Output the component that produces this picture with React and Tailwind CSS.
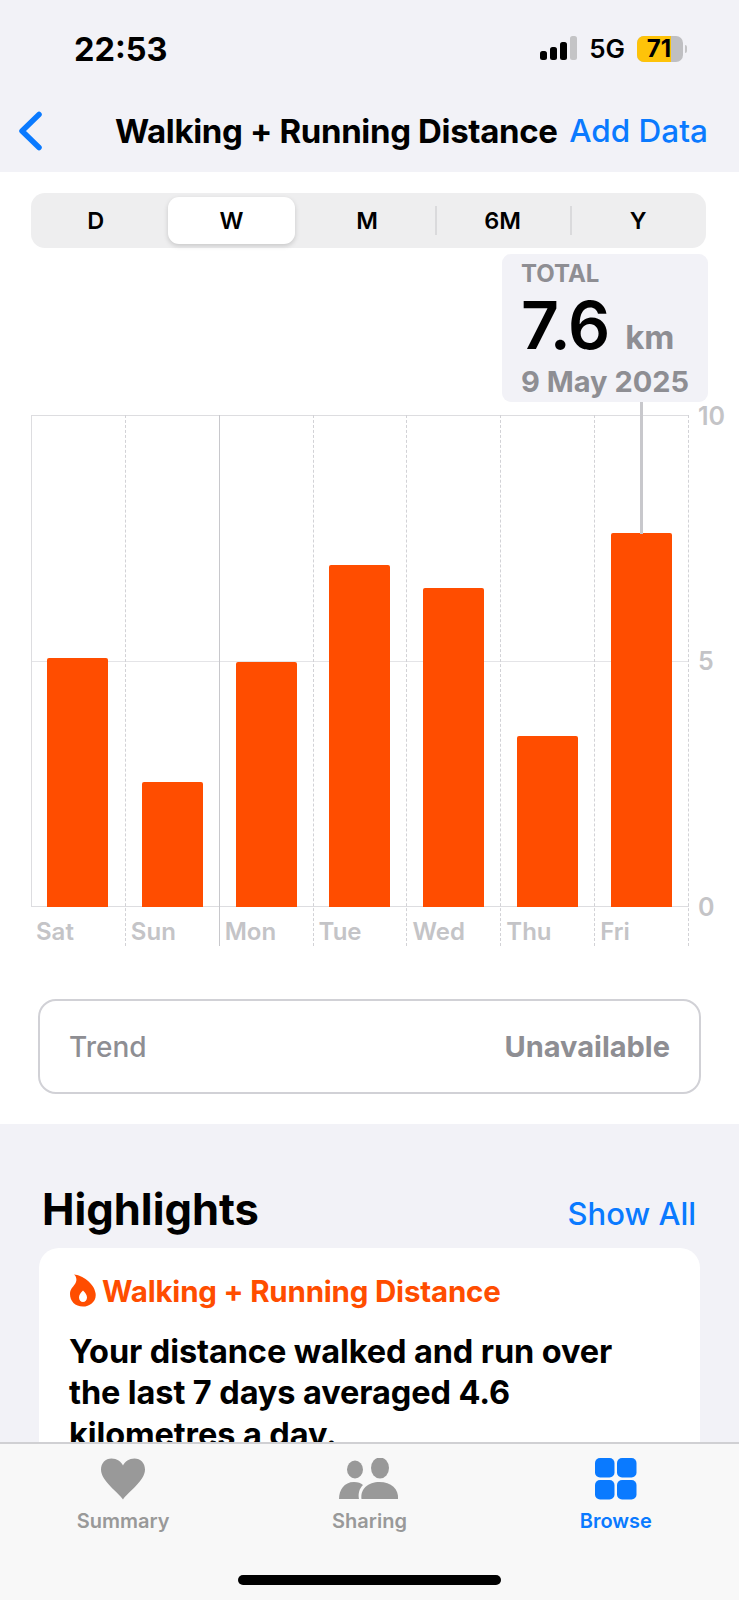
const days = [
  { label: 'Sat', height: 249 },
  { label: 'Sun', height: 125 },
  { label: 'Mon', height: 245 },
  { label: 'Tue', height: 342 },
  { label: 'Wed', height: 319 },
  { label: 'Thu', height: 171 },
  { label: 'Fri', height: 374 },
]

const ranges = ['D', 'W', 'M', '6M', 'Y']

function StatusBar() {
  return (
    <div className="flex h-[100px] items-start justify-between pt-[31px] pl-[74px] pr-[52px]">
      <span className="text-[32.5px] leading-[38px] font-bold text-black">22:53</span>
      <div className="flex items-center pt-[5px]">
        <svg width="37" height="26" viewBox="0 0 37 26">
          <rect x="0" y="15" width="7" height="9" rx="2.5" fill="#000" />
          <rect x="10" y="11" width="7" height="13" rx="2.5" fill="#000" />
          <rect x="20" y="6" width="7" height="18" rx="2.5" fill="#000" />
          <rect x="30" y="0" width="7" height="24" rx="2.5" fill="#c4c4c6" />
        </svg>
        <span className="ml-[12px] text-[26px] leading-[26px] font-semibold text-black">5G</span>
        <div className="relative ml-[12px] h-[26px] w-[46px] rounded-[7px] bg-[#bfbfc2]">
          <div className="h-full w-[34px] rounded-l-[7px] bg-[#fec309]" />
          <span className="absolute inset-0 flex items-center justify-center pr-[2px] text-[24px] leading-none font-bold text-black">71</span>
        </div>
        <div className="ml-[2px] h-[8px] w-[2px] rounded-r-full bg-[#c4c4c6]" />
      </div>
    </div>
  )
}

function NavBar() {
  return (
    <div className="flex h-[72px] items-start pl-[17px] pr-[31px]">
      <svg width="26" height="40" viewBox="0 0 26 40" className="mt-[11px]">
        <path d="M22 3.5 L5 20 L22 36.5" fill="none" stroke="#0a7aff" strokeWidth="5.5" strokeLinecap="round" strokeLinejoin="round" />
      </svg>
      <span className="ml-[72px] pt-[1px] text-[33px] leading-[60px] font-bold tracking-[-0.35px] text-black whitespace-nowrap">Walking + Running Distance</span>
      <span className="ml-auto pt-[1px] text-[31.5px] leading-[60px] font-medium text-[#0a7aff] whitespace-nowrap">Add Data</span>
    </div>
  )
}

function RangePicker() {
  return (
    <div className="mx-[31px] h-[55px] w-[675px] rounded-[14px] bg-[#eeeeef]">
      <div className="ml-[-3px] flex h-full w-[678px] items-center">
        {ranges.map((r, i) => (
          <div key={r} className="relative flex h-full flex-1 items-center justify-center">
            {r === 'W' && <div className="absolute inset-x-[4px] inset-y-[4px] rounded-[11px] bg-white shadow-[0_2px_5px_rgba(0,0,0,0.16)]" />}
            {i > 2 && <div className="absolute left-0 top-[13px] h-[29px] w-[2px] bg-[#dadadc]" />}
            <span className="relative text-[23.5px] font-semibold text-black">{r}</span>
          </div>
        ))}
      </div>
    </div>
  )
}

function Chart() {
  return (
    <div className="relative mx-[31px] mt-[167px] h-[531px] w-[658px]">
      {/* grid lines */}
      <div className="absolute inset-x-0 top-0 h-[492px] border-y border-l border-[#dddde0]">
        <div className="mt-[245px] h-px bg-[#e4e4e7]" />
      </div>

      <div className="relative grid h-full grid-cols-7 border-r border-dashed border-[#d2d2d6]">
        {days.map((d, i) => (
          <div
            key={d.label}
            className={
              i === 0
                ? 'flex h-full flex-col'
                : i === 2
                  ? 'flex h-full flex-col border-l border-[#c8c8cc]'
                  : 'flex h-full flex-col border-l border-dashed border-[#d2d2d6]'
            }
          >
            <div className="flex h-[492px] items-end justify-center">
              <div className="w-[61px] rounded-t-[2px] bg-[#ff4d00]" style={{ height: d.height }} />
            </div>
            <span className="pl-[5px] pt-[11px] text-[24px] leading-[28px] font-semibold text-[#c4c4c7]">{d.label}</span>
          </div>
        ))}
      </div>

      {/* value axis */}
      <span className="absolute left-[667px] top-[-13px] text-[25px] leading-[28px] font-semibold text-[#c4c4c7]">10</span>
      <span className="absolute left-[667px] top-[232px] text-[25px] leading-[28px] font-semibold text-[#c4c4c7]">5</span>
      <span className="absolute left-[667px] top-[478px] text-[25px] leading-[28px] font-semibold text-[#c4c4c7]">0</span>

      {/* selected day callout */}
      <div className="absolute left-[609px] top-[-13px] h-[132px] w-[3px] bg-[#c8c8cc]" />
      <div className="absolute left-[471px] top-[-161px] h-[148px] w-[206px] rounded-[9px] bg-[#f2f2f7] pl-[19px] pt-[6px]">
        <div className="text-[24px] leading-[28px] font-bold text-[#8e8e93]">TOTAL</div>
        <div className="mt-[2px] flex items-baseline">
          <span className="text-[66px] leading-[70px] font-semibold tracking-[-1px] text-black">7.6</span>
          <span className="ml-[16px] text-[33px] leading-[40px] font-bold text-[#8e8e93]">km</span>
        </div>
        <div className="mt-[4px] text-[29px] leading-[36px] font-bold whitespace-nowrap text-[#8e8e93]">9 May 2025</div>
      </div>
    </div>
  )
}

function TabBar() {
  return (
    <div className="relative grid h-[158px] shrink-0 grid-cols-3 border-t-2 border-[#d0d0d3] bg-[#f8f8f8] pt-[14px]">
      <div className="flex flex-col items-center">
        <svg width="46" height="42" viewBox="0 0 46 42">
          <path d="M23 41.5 C18 34 1 23 1 11.5 C1 5 5.5 0.5 11.5 0.5 C17 0.5 21 3.5 23 7.5 C25 3.5 29 0.5 34.5 0.5 C40.5 0.5 45 5 45 11.5 C45 23 28 34 23 41.5 Z" fill="#999999" />
        </svg>
        <span className="mt-[8px] text-[20px] leading-[26px] font-semibold text-[#999999]">Summary</span>
      </div>
      <div className="flex flex-col items-center">
        <svg width="60" height="42" viewBox="0 0 60 42">
          <ellipse cx="16" cy="11.5" rx="8" ry="9" fill="#999999" />
          <ellipse cx="41" cy="10" rx="9" ry="10.5" fill="#999999" />
          <path d="M0 41 C0 32 5 24 15 24 C19 24 22 25 24 27 C20 31 19 36 20 41 Z" fill="#999999" />
          <path d="M22.5 41 C21 31 29 24 40.5 24 C52 24 60 31 59 41 Z" fill="#999999" />
        </svg>
        <span className="mt-[8px] text-[20px] leading-[26px] font-semibold text-[#999999]">Sharing</span>
      </div>
      <div className="flex flex-col items-center">
        <svg width="42" height="42" viewBox="0 0 42 42">
          <rect x="0" y="0" width="19.5" height="19.5" rx="5" fill="#0a7aff" />
          <rect x="22" y="0" width="19.5" height="19.5" rx="5" fill="#0a7aff" />
          <rect x="0" y="22" width="19.5" height="19.5" rx="5" fill="#0a7aff" />
          <rect x="22" y="22" width="19.5" height="19.5" rx="5" fill="#0a7aff" />
        </svg>
        <span className="mt-[8px] text-[20px] leading-[26px] font-semibold text-[#0a7aff]">Browse</span>
      </div>
      <div className="absolute bottom-[15px] left-[238px] h-[10px] w-[263px] rounded-full bg-black" />
    </div>
  )
}

export default function App() {
  return (
    <div className="flex h-[1600px] w-[739px] flex-col overflow-hidden bg-[#f2f2f7] font-['Inter',sans-serif]">
      <div className="min-h-0 flex-1 overflow-hidden">
        <StatusBar />
        <NavBar />

        <div className="h-[952px] bg-white pt-[21px]">
          <RangePicker />
          <Chart />
          <div className="mt-[53px] ml-[38px] flex h-[95px] w-[663px] items-center justify-between rounded-[18px] border-2 border-[#d1d1d6] px-[29px]">
            <span className="text-[28px] font-medium text-[#8e8e93]">Trend</span>
            <span className="text-[29px] font-bold text-[#8e8e93]">Unavailable</span>
          </div>
        </div>

        <div className="flex items-baseline justify-between pl-[42px] pr-[43px] pt-[60px]">
          <h2 className="text-[43.5px] leading-[50px] font-bold text-black">Highlights</h2>
          <span className="text-[31px] font-medium text-[#0a7aff]">Show All</span>
        </div>

        <div className="mx-[39px] mt-[10px] rounded-[20px] bg-white px-[30px] pt-[26px] pb-[20px]">
          <div className="flex items-center pl-[1px]">
            <svg width="26" height="33" viewBox="0 0 26 33">
              <path
                fillRule="evenodd"
                d="M4 0.5 C12 1 24 9 25.5 19 C27 27 20 32.5 13 32.5 C5 32.5 0 27 0 20 C0 15 3 13 5 10 C7 7 7 3 4 0.5 Z M13 16.5 C10.5 19 9 21 9 23.5 C9 26 10.8 28 13 28 C15.2 28 17 26 17 23.5 C17 21 15.5 19 13 16.5 Z"
                fill="#ff4d00"
              />
            </svg>
            <span className="ml-[6px] text-[29.5px] leading-[34px] font-bold tracking-[-0.2px] whitespace-nowrap text-[#ff4d00]">Walking + Running Distance</span>
          </div>
          <p className="mt-[23px] max-w-[585px] text-[32.5px] leading-[41.5px] font-bold tracking-[-0.1px] text-black">
            Your distance walked and run over the last 7 days averaged 4.6 kilometres a day.
          </p>
        </div>
      </div>

      <TabBar />
    </div>
  )
}
